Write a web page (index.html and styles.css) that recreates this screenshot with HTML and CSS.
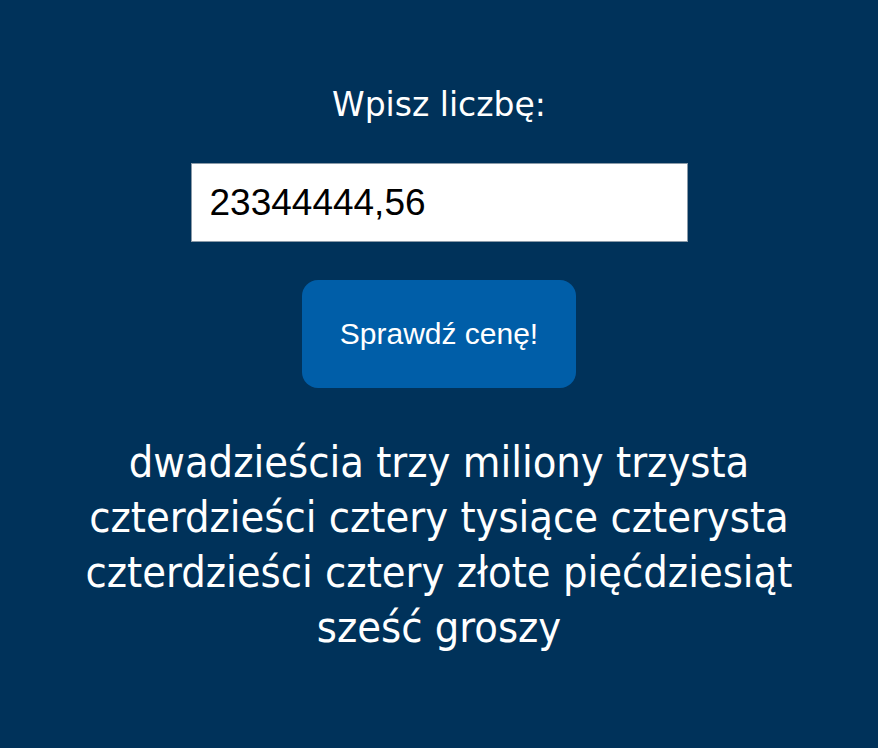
FILE: index.html
```html
<!DOCTYPE html>
<html lang="pl">
<head>
<meta charset="utf-8">
<title>Sprawdź cenę</title>
<link rel="stylesheet" href="styles.css">
</head>
<body>
<main class="app">
  <label class="label" for="num">Wpisz liczbę:</label>
  <input class="field" id="num" type="text" value="23344444,56">
  <button class="btn" type="button">Sprawdź cenę!</button>
  <p class="result">dwadzieścia trzy miliony trzysta czterdzieści cztery tysiące czterysta czterdzieści cztery złote pięćdziesiąt sześć groszy</p>
</main>
</body>
</html>
```
FILE: styles.css
```css
html, body {
  margin: 0;
  padding: 0;
  height: 100%;
}
body {
  background: #00325a;
  color: #ffffff;
  font-family: "DejaVu Sans Condensed", "DejaVu Sans", sans-serif;
}
.app {
  display: flex;
  flex-direction: column;
  align-items: center;
  padding-top: 85px;
}
.label {
  font-family: "DejaVu Sans", sans-serif;
  font-size: 33px;
  line-height: 40px;
  color: #ffffff;
}
.field {
  margin-top: 38px;
  box-sizing: border-box;
  width: 497px;
  height: 79px;
  padding: 0 18px;
  border: 1px solid #8a9aa8;
  background: #ffffff;
  color: #000000;
  font-family: "Liberation Sans", Arial, sans-serif;
  font-size: 37px;
  outline: none;
}
.btn {
  margin-top: 38px;
  width: 274px;
  height: 108px;
  border: none;
  border-radius: 16px;
  background: #005ea8;
  color: #ffffff;
  font-family: "Liberation Sans", Arial, sans-serif;
  font-size: 30px;
  cursor: pointer;
}
.result {
  margin: 47px 0 0;
  width: 730px;
  text-align: center;
  font-size: 43px;
  line-height: 55px;
}
```
